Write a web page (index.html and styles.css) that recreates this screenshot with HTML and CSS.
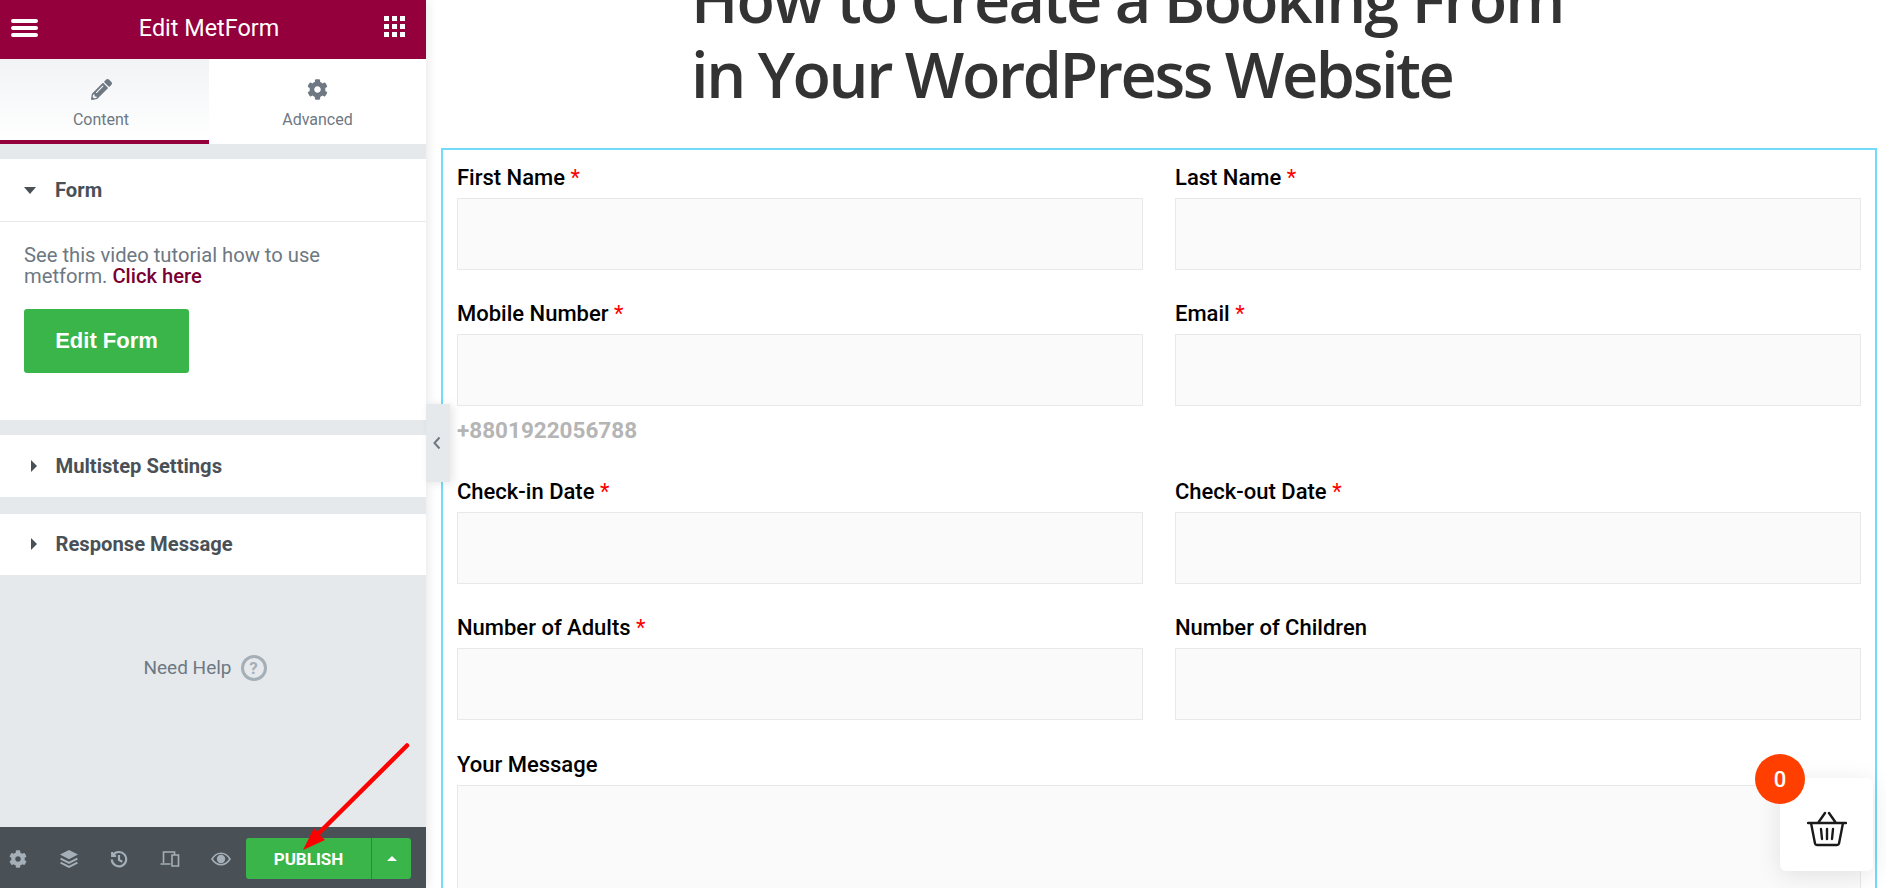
FILE: index.html
```html
<!DOCTYPE html>
<html lang="en">
<head>
<meta charset="utf-8">
<title>Edit MetForm</title>
<link rel="stylesheet" href="styles.css">
</head>
<body>
<svg class="defs" width="0" height="0" aria-hidden="true">
  <defs>
    <symbol id="gear" viewBox="0 0 512 512"><path d="M487.4 315.7l-42.6-24.6c4.3-23.2 4.3-47 0-70.2l42.6-24.6c4.9-2.8 7.1-8.6 5.5-14-11.1-35.6-30-67.8-54.7-94.6-3.8-4.1-10-5.1-14.8-2.3L380.8 110c-17.9-15.4-38.5-27.3-60.8-35.1V25.8c0-5.6-3.9-10.5-9.4-11.7-36.7-8.2-74.3-7.8-109.2 0-5.5 1.2-9.4 6.1-9.4 11.7V75c-22.2 7.9-42.8 19.8-60.8 35.1L88.7 85.5c-4.9-2.8-11-1.9-14.8 2.3-24.7 26.7-43.6 58.9-54.7 94.6-1.7 5.4.6 11.2 5.5 14L67.3 221c-4.3 23.2-4.3 47 0 70.2l-42.6 24.6c-4.9 2.8-7.1 8.6-5.5 14 11.1 35.6 30 67.8 54.7 94.6 3.8 4.1 10 5.1 14.8 2.3l42.6-24.6c17.9 15.4 38.5 27.3 60.8 35.1v49.2c0 5.6 3.9 10.5 9.4 11.7 36.7 8.2 74.3 7.8 109.2 0 5.5-1.2 9.4-6.1 9.4-11.7v-49.2c22.2-7.9 42.8-19.8 60.8-35.1l42.6 24.6c4.9 2.8 11 1.9 14.8-2.3 24.7-26.7 43.6-58.9 54.7-94.6 1.5-5.5-.7-11.3-5.6-14.1zM256 336c-44.1 0-80-35.9-80-80s35.9-80 80-80 80 35.9 80 80-35.9 80-80 80z"/></symbol>
  </defs>
</svg>
<div class="app">
  <aside class="panel">
    <header class="topbar">
      <svg class="burger" viewBox="0 0 27 18" width="27" height="18"><path d="M2 2h23M2 9h23M2 16h23"/></svg>
      <span class="topbar-title">Edit MetForm</span>
      <svg class="apps" viewBox="0 0 21 21" width="21" height="21"><path d="M0 0h5v5H0zM8 0h5v5H8zM16 0h5v5h-5zM0 8h5v5H0zM8 8h5v5H8zM16 8h5v5h-5zM0 16h5v5H0zM8 16h5v5H8zM16 16h5v5h-5z"/></svg>
    </header>
    <nav class="tabs">
      <div class="tab tab-active">
        <svg class="tab-icon" viewBox="0 0 512 512" width="21" height="21"><path d="M497.9 142.1l-46.1 46.1c-4.7 4.7-12.3 4.700-17 0l-111-111c-4.700-4.700-4.700-12.300 0-17l46.100-46.100c18.700-18.700 49.100-18.700 67.900 0l60.100 60.100c18.800 18.700 18.800 49.100 0 67.900zM284.200 99.800L21.600 362.400.4 483.900c-2.900 16.400 11.400 30.600 27.800 27.800l121.500-21.300 262.600-262.600c4.700-4.700 4.700-12.300 0-17l-111-111c-4.800-4.700-12.400-4.700-17.100 0zM124.100 339.900c-5.500-5.500-5.500-14.300 0-19.800l154-154c5.500-5.500 14.300-5.500 19.800 0s5.500 14.300 0 19.800l-154 154c-5.500 5.500-14.300 5.500-19.800 0zM88 424h48v36.300l-64.500 11.300-31.100-31.100L51.700 376H88v48z"/></svg>
        <span>Content</span>
      </div>
      <div class="tab">
        <svg class="tab-icon" width="21" height="21"><use href="#gear"/></svg>
        <span>Advanced</span>
      </div>
    </nav>
    <section class="sect sect-form">
      <div class="sect-head sect-head-open"><i class="caret caret-down"></i><span>Form</span></div>
      <div class="sect-body">
        <p class="note">See this video tutorial how to use metform. <a class="note-link">Click here</a></p>
        <button class="edit-btn">Edit Form</button>
      </div>
    </section>
    <section class="sect sect-multi">
      <div class="sect-head"><i class="caret caret-right"></i><span>Multistep Settings</span></div>
    </section>
    <section class="sect sect-resp">
      <div class="sect-head"><i class="caret caret-right"></i><span>Response Message</span></div>
    </section>
    <div class="help">
      <span>Need Help</span>
      <span class="help-mark">?</span>
    </div>
    <footer class="bottombar">
      <div class="tools">
        <svg class="tool" width="18" height="18"><use href="#gear"/></svg>
        <svg class="tool" viewBox="0 0 20 20" width="20" height="20"><path d="M10 1l9 4.600-9 4.600-9-4.600z"/><path class="tool-line" d="M1.600 9.600l8.400 4.300 8.400-4.300M1.600 13.600l8.400 4.300 8.400-4.300"/></svg>
        <svg class="tool" viewBox="0 0 20 20" width="18" height="18"><path class="tool-line wide" d="M3.200 6A8 8 0 1 1 2 10.500M2.400 2.200v4.400h4.400M10 5.500V11l3.600 2"/></svg>
        <svg class="tool" viewBox="0 0 20 18" width="20" height="18"><path class="tool-line thin" d="M3.500 13V2h11v2.500M.5 14h10M12 5h6.500v11H12z"/></svg>
        <svg class="tool" viewBox="0 0 20 14" width="20" height="14"><path class="tool-line thin" d="M1 7c2.400-3.800 5.400-5.700 9-5.700S16.600 3.200 19 7c-2.400 3.800-5.400 5.700-9 5.700S3.400 10.800 1 7z"/><circle cx="10" cy="7" r="4.200"/></svg>
      </div>
      <div class="publish">
        <span class="publish-main">PUBLISH</span>
        <span class="publish-more"><i class="caret-up"></i></span>
      </div>
    </footer>
    <svg class="arrow" viewBox="0 0 120 120" width="120" height="120"><path class="arrow-shaft" d="M107 5.500L18 94"/><path class="arrow-head" d="M3 110l11-22 4 5 7 7z"/></svg>
  </aside>
  <div class="collapse"><svg viewBox="0 0 8 14" width="8" height="14"><path d="M6.500 1.500L1.500 7l5 5.500"/></svg></div>
  <main class="preview">
    <h1 class="title"><span class="title-line title-first">How to Create a Booking From</span><span class="title-line">in Your WordPress Website</span></h1>
    <form class="form">
      <div class="field"><label class="lbl">First Name <em>*</em></label><div class="input"></div></div>
      <div class="field"><label class="lbl">Last Name <em>*</em></label><div class="input"></div></div>
      <div class="field field-hint"><label class="lbl">Mobile Number <em>*</em></label><div class="input"></div><div class="hint">+8801922056788</div></div>
      <div class="field field-hint"><label class="lbl">Email <em>*</em></label><div class="input"></div></div>
      <div class="field"><label class="lbl">Check-in Date <em>*</em></label><div class="input"></div></div>
      <div class="field"><label class="lbl">Check-out Date <em>*</em></label><div class="input"></div></div>
      <div class="field"><label class="lbl">Number of Adults <em>*</em></label><div class="input"></div></div>
      <div class="field"><label class="lbl">Number of Children</label><div class="input"></div></div>
      <div class="field field-wide"><label class="lbl">Your Message</label><div class="input input-area"></div></div>
    </form>
    <div class="cart">
      <span class="cart-badge">0</span>
      <svg viewBox="0 0 40 36" width="40" height="36"><path d="M1 12h38M4 12l4 20.500c.2 1 1 1.500 2 1.500h20c1 0 1.800-.5 2-1.500L36 12M11 12l7-10M29 12l-7-10M14 18l1 10M20 18v10M26 18l-1 10"/></svg>
    </div>
  </main>
</div>
</body>
</html>
```

FILE: styles.css
```css
* { box-sizing: border-box; }
html, body { margin: 0; height: 100%; overflow: hidden; background: #fff; }
body { font-family: Roboto, "Liberation Sans", sans-serif; }
.defs { position: absolute; }
.app { display: flex; height: 888px; position: relative; }

.panel { width: 426px; flex: none; height: 888px; background: #e6e9ec; display: flex; flex-direction: column; position: relative; box-shadow: 0 0 12px rgba(0,0,0,.12); z-index: 2; }
.topbar { height: 59px; flex: none; background: #93003c; color: #fff; display: flex; align-items: center; justify-content: space-between; padding: 0 21px 4px 11px; position: relative; }
.apps { fill: #fff; margin-top: -2px; }
.burger { fill: none; stroke: #fff; stroke-width: 4; stroke-linecap: round; }
.topbar-title { font-size: 23.4px; position: absolute; left: 0; top: 15px; line-height: 27px; width: 418px; text-align: center; }

.tabs { display: flex; height: 85px; flex: none; background: #fff; }
.tab { flex: 1; display: flex; flex-direction: column; align-items: center; padding-top: 20px; gap: 10px; color: #6d7882; font-size: 16px; line-height: 19px; }
.tab-active { flex: none; width: 209px; padding-right: 7px; border-bottom: 4px solid #93003c; background: linear-gradient(#f1f3f5, #fff); }
.tab-icon { fill: #6d7882; display: block; }

.sect { background: #fff; flex: none; }
.sect-form { margin-top: 15px; height: 261px; }
.sect-multi { margin-top: 15px; height: 62px; }
.sect-resp { margin-top: 17px; height: 61px; padding-bottom: 1px; }
.sect-head { display: flex; align-items: center; height: 100%; padding-left: 24px; font-size: 20.2px; font-weight: 700; color: #495157; }
.sect-head-open { height: 63px; border-bottom: 1px solid #e6e9ec; }
.caret { display: block; flex: none; }
.caret-down { border-left: 6px solid transparent; border-right: 6px solid transparent; border-top: 7px solid #495157; margin-right: 19px; }
.caret-right { border-top: 6px solid transparent; border-bottom: 6px solid transparent; border-left: 6px solid #495157; margin: 0 18.5px 0 7px; }
.sect-body { padding: 23px 24px 0; }
.note { margin: 0; width: 330px; font-size: 20.2px; line-height: 21px; color: #6d7882; }
.note-link { color: #7a0032; font-weight: 500; }
.edit-btn { display: block; margin-top: 22px; width: 165px; height: 64px; border: 0; border-radius: 3px; background: #39b54a; color: #fff; font: 700 22px "Liberation Sans", sans-serif; }

.help { flex: 1; display: flex; justify-content: center; align-items: center; gap: 9px; color: #6d7882; font-size: 19px; padding: 0 16px 67px 0; }
.help-mark { width: 26px; height: 26px; border: 3px solid #a4afb7; border-radius: 50%; color: #a4afb7; font-size: 17px; font-weight: 700; display: flex; align-items: center; justify-content: center; }

.bottombar { height: 61px; flex: none; background: #495157; display: flex; align-items: center; justify-content: space-between; padding: 3px 15px 0 9px; }
.tools { display: flex; align-items: center; gap: 31.5px; }
.tool { fill: #a4afb7; display: block; }
.tool-line { fill: none; stroke: #a4afb7; stroke-width: 2; }
.tool-line.wide { stroke-width: 2.4; }
.tool-line.thin { stroke-width: 1.6; }
.publish { display: flex; height: 41px; margin-top: -1px; border-radius: 3px; overflow: hidden; background: #39b54a; color: #fff; }
.publish-main { width: 126px; display: flex; align-items: center; justify-content: center; font-size: 17px; font-weight: 700; border-right: 1px solid #2b8a38; }
.publish-more { width: 39px; display: flex; align-items: center; justify-content: center; }
.caret-up { border-left: 5px solid transparent; border-right: 5px solid transparent; border-bottom: 5px solid #fff; }
.arrow { position: absolute; left: 300px; top: 740px; z-index: 3; }
.arrow-shaft { fill: none; stroke: #f00; stroke-width: 4.5; stroke-linecap: round; }
.arrow-head { fill: #f00; }

.collapse { position: absolute; left: 426px; top: 404px; width: 24px; height: 78px; background: #e6e9ec; box-shadow: 3px 1px 8px rgba(0,0,0,.1); display: flex; align-items: center; justify-content: center; padding-right: 3px; z-index: 3; }
.collapse svg { fill: none; stroke: #6d7882; stroke-width: 2; }

.preview { flex: 1; min-width: 0; height: 888px; overflow: hidden; position: relative; }
.title { margin: -39px 0 0 265px; font-family: "Open Sans", sans-serif; font-weight: 600; font-size: 63px; letter-spacing: -2.43px; line-height: 75px; color: #333; white-space: nowrap; }
.title-line { display: block; }
.title-first { letter-spacing: -1.93px; }
.form { margin: 37px 9px 0 15px; height: 800px; border: 2px solid #72dbfa; border-bottom: 0; padding: 0 14px; display: grid; grid-template-columns: 686px 686px; column-gap: 32px; align-content: start; }
.field { height: 136px; padding-top: 16px; }
.field-hint { height: 178px; }
.field-wide { grid-column: 1 / -1; padding-top: 17px; }
.lbl { display: block; font-size: 22px; line-height: 24px; font-weight: 500; color: #000; height: 24px; margin-bottom: 8px; }
.lbl em { font-style: normal; color: #f00; font-weight: 400; }
.input { height: 72px; background: #fafafa; border: 1px solid #e8e8e8; }
.input-area { width: 1404px; height: 200px; }
.hint { margin-top: 9px; font-size: 22.5px; line-height: 30px; font-weight: 700; color: #b5b5b5; }

.cart { position: absolute; left: 1354px; top: 778px; width: 93px; height: 93px; background: #fff; border-radius: 6px; box-shadow: 0 4px 24px rgba(0,0,0,.1); display: flex; align-items: center; justify-content: center; padding-top: 9px; }
.cart svg { fill: none; stroke: #1a1a1a; stroke-width: 2.4; stroke-linecap: round; stroke-linejoin: round; }
.cart-badge { position: absolute; left: -25px; top: -24px; width: 50px; height: 50px; border-radius: 50%; background: #ff3f00; color: #fff; font-size: 22px; font-weight: 500; display: flex; align-items: center; justify-content: center; }
```
